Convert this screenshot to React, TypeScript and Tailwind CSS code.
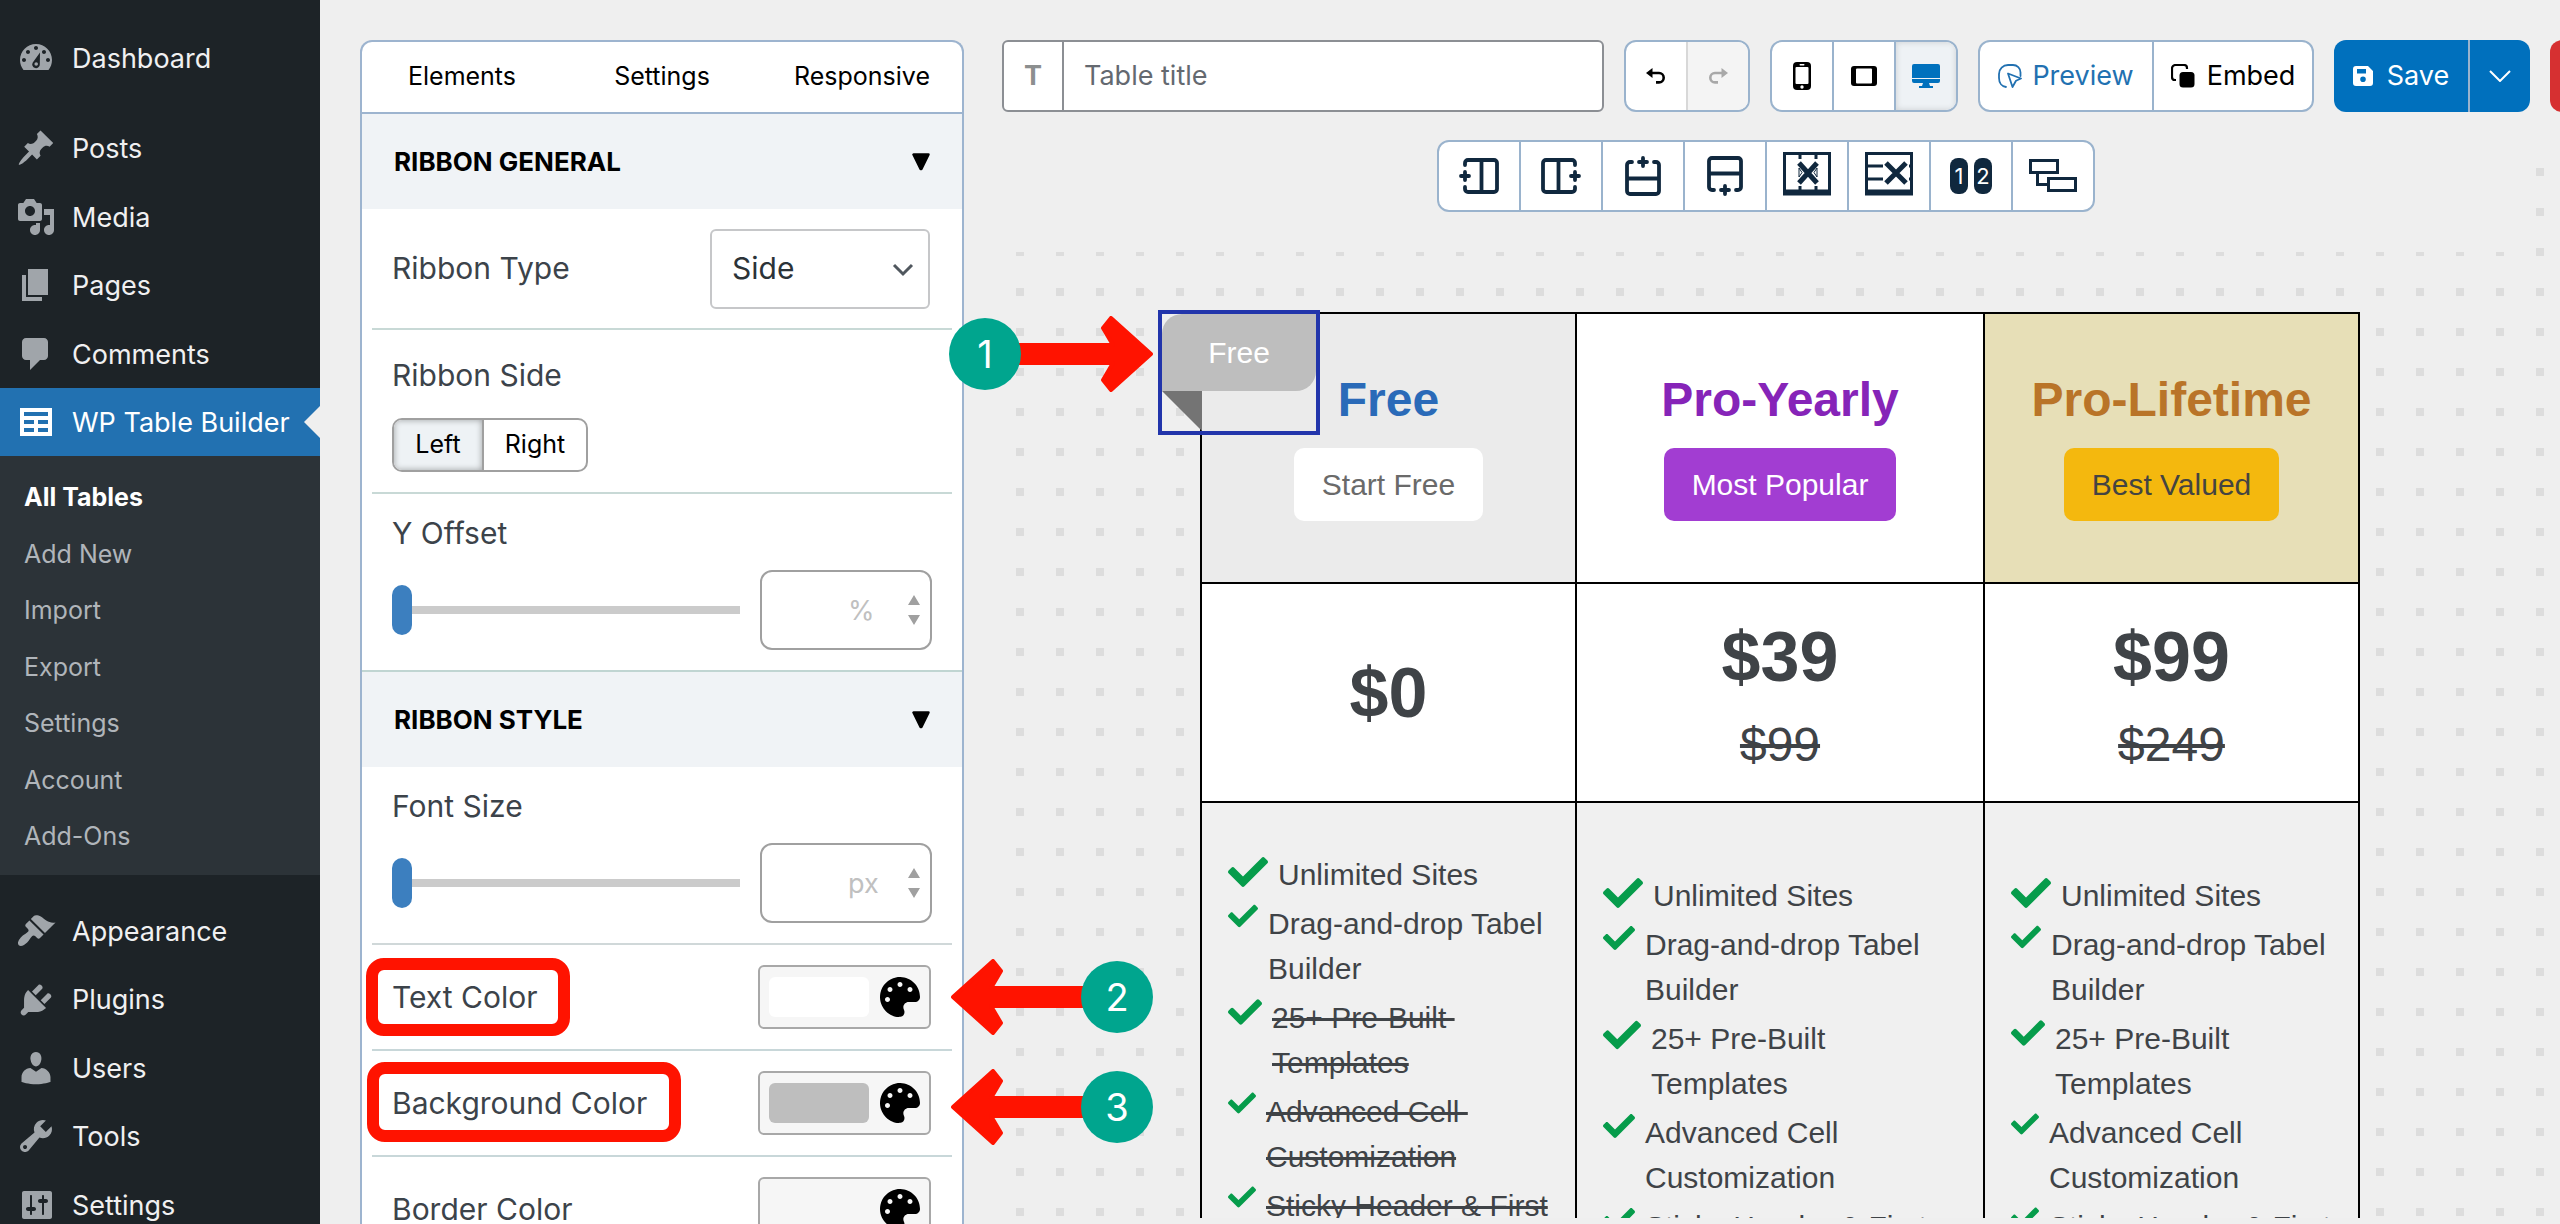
import { useState } from "react";
import type { ReactNode } from "react";
import { FaPalette } from "react-icons/fa";

const DASHICONS: Record<string, string> = {
  dashboard:
    "M3.76 16h12.48c1.1-1.37 1.76-3.11 1.76-5 0-4.42-3.58-8-8-8s-8 3.58-8 8c0 1.89.66 3.63 1.76 5zM10 4c.55 0 1 .45 1 1s-.45 1-1 1-1-.45-1-1 .45-1 1-1zM6 6c.55 0 1 .45 1 1s-.45 1-1 1-1-.45-1-1 .45-1 1-1zM14 6c.55 0 1 .45 1 1s-.45 1-1 1-1-.45-1-1 .45-1 1-1zM4 10c.55 0 1 .45 1 1s-.45 1-1 1-1-.45-1-1 .45-1 1-1zM16 10c.55 0 1 .45 1 1s-.45 1-1 1-1-.45-1-1 .45-1 1-1zM12 7.2l-.1 5.9a1.9 1.9 0 1 1-3.5-.9zM10.1 12.1a.9.9 0 1 0 0 1.8.9.9 0 0 0 0-1.8z",
  posts:
    "M10.44 3.02l1.82-1.82 6.36 6.35-1.83 1.82c-1.05-.68-2.48-.57-3.41.36l-.75.75c-.92.93-1.04 2.35-.35 3.41l-1.83 1.82-2.41-2.41-2.8 2.79c-.42.42-3.38 2.71-3.8 2.29s1.86-3.39 2.28-3.81l2.79-2.79L4.1 9.36l1.83-1.82c1.05.69 2.48.57 3.4-.36l.75-.75c.93-.92 1.05-2.35.36-3.41z",
  media:
    "M13 11V4c0-.55-.45-1-1-1h-1.67L9 1H5L3.67 3H2c-.55 0-1 .45-1 1v7c0 .55.45 1 1 1h10c.55 0 1-.45 1-1zM7 4.5c1.38 0 2.5 1.12 2.5 2.5S8.38 9.5 7 9.5 4.5 8.38 4.5 7 5.62 4.5 7 4.5zM14 6h5v10.5c0 1.38-1.12 2.5-2.5 2.5S14 17.88 14 16.5s1.12-2.5 2.5-2.5c.17 0 .34.02.5.05V9h-3V6zm-4 8.05V13h2v3.5c0 1.38-1.12 2.5-2.5 2.5S7 17.88 7 16.5 8.12 14 9.5 14c.17 0 .34.02.5.05z",
  pages: "M6 15V2h10v13H6zm-1 1h8v2H3V5h2v11z",
  comments: "M5 2h9c1.1 0 2 .9 2 2v7c0 1.1-.9 2-2 2h-2l-5 5v-5H5c-1.1 0-2-.9-2-2V4c0-1.1.9-2 2-2z",
  table: "M18 17V3H2v14h16zM16 7H4V5h12v2zm-7 4H4V9h5v2zm7 0h-5V9h5v2zm-7 4H4v-2h5v2zm7 0h-5v-2h5v2z",
  appearance:
    "M14.48 11.06L7.41 3.99l1.5-1.5c.5-.56 2.3-.47 3.51.32 1.21.8 1.43 1.28 2.91 2.1 1.18.64 2.45 1.26 4.45.85zm-.71.71L6.7 4.7 4.93 6.47c-.39.39-.39 1.02 0 1.41l1.06 1.06c.39.39.39 1.03 0 1.42-.6.6-1.43 1.11-2.21 1.69-.35.26-.7.53-1.01.84C1.43 14.23.4 16.08 1.4 17.07c.99 1 2.84-.03 4.18-1.36.31-.31.58-.66.85-1.02.57-.78 1.08-1.61 1.69-2.21.39-.39 1.02-.39 1.41 0l1.06 1.06c.39.39 1.02.39 1.41 0z",
  plugins:
    "M13.11 4.36L9.87 7.6 8 5.73l3.24-3.24c.35-.34 1.05-.2 1.56.32.52.51.66 1.21.31 1.55zm-8 1.77l.91-1.12 9.01 9.01-1.19.84c-.71.71-2.63 1.16-3.82 1.16H6.14L4.9 17.26c-.59.59-1.54.59-2.12 0-.59-.58-.59-1.53 0-2.12l1.24-1.24v-3.88c0-1.13.4-3.19 1.09-3.89zm7.26 3.97l3.24-3.24c.34-.35 1.04-.21 1.55.31.52.51.66 1.21.31 1.55l-3.24 3.25z",
  users:
    "M10 9.25c-2.27 0-2.73-3.44-2.73-3.44C7 4.02 7.82 2 9.97 2c2.16 0 2.98 2.02 2.71 3.81 0 0-.41 3.44-2.68 3.44zm0 2.57L12.72 10c2.39 0 4.52 2.33 4.52 4.53v2.49s-3.65 1.13-7.24 1.13c-3.65 0-7.24-1.13-7.24-1.13v-2.49c0-2.25 1.94-4.48 4.47-4.48z",
  tools:
    "M16.68 9.77c-1.34 1.34-3.3 1.67-4.95.99l-5.41 6.52c-.99.99-2.59.99-3.58 0s-.99-2.59 0-3.57l6.52-5.42c-.68-1.65-.35-3.61.99-4.95 1.28-1.28 3.12-1.62 4.72-1.06l-2.89 2.89 2.82 2.82 2.86-2.87c.53 1.58.18 3.39-1.08 4.65zM3.81 16.21c.4.39 1.04.39 1.43 0 .4-.4.4-1.04 0-1.43-.39-.4-1.03-.4-1.43 0-.39.39-.39 1.03 0 1.43z",
  settings:
    "M18 16V4c0-.55-.45-1-1-1H4c-.55 0-1 .45-1 1v12c0 .55.45 1 1 1h13c.55 0 1-.45 1-1zM8 11h1c.55 0 1 .45 1 1s-.45 1-1 1H8v1.5c0 .28-.22.5-.5.5s-.5-.22-.5-.5V13H6c-.55 0-1-.45-1-1s.45-1 1-1h1V5.5c0-.28.22-.5.5-.5s.5.22.5.5V11zm5-2h-1c-.55 0-1-.45-1-1s.45-1 1-1h1V5.5c0-.28.22-.5.5-.5s.5.22.5.5V7h1c.55 0 1 .45 1 1s-.45 1-1 1h-1v5.5c0 .28-.22.5-.5.5s-.5-.22-.5-.5V9z",
};

const CONTENT_LINKS = [
  { icon: "posts", label: "Posts" },
  { icon: "media", label: "Media" },
  { icon: "pages", label: "Pages" },
  { icon: "comments", label: "Comments" },
];

const ADMIN_LINKS = [
  { icon: "appearance", label: "Appearance" },
  { icon: "plugins", label: "Plugins" },
  { icon: "users", label: "Users" },
  { icon: "tools", label: "Tools" },
  { icon: "settings", label: "Settings" },
];

const SUBMENU = ["Add New", "Import", "Export", "Settings", "Account", "Add-Ons"];

function MenuLink({ icon, label, active }: { icon: string; label: string; active?: boolean }) {
  return (
    <a
      href="#"
      className={
        active
          ? "relative flex h-[68px] items-center bg-[#2271b1] text-[27px] text-white"
          : "flex items-center text-[27px] text-[#f0f0f1]"
      }
    >
      <span className="flex w-[72px] shrink-0 justify-center">
        <svg viewBox="0 0 20 20" className={active ? "size-10" : "size-10 text-[#a0a5aa]"} fill="currentColor" fillRule="evenodd">
          <path d={DASHICONS[icon]} />
        </svg>
      </span>
      <span className="whitespace-nowrap pt-0.5">{label}</span>
      {active && (
        <span className="absolute right-0 top-[18px] border-y-16 border-r-16 border-y-transparent border-r-[#efefef]" />
      )}
    </a>
  );
}

function Sidebar() {
  return (
    <nav className="w-80 shrink-0 bg-[#1d2327]">
      <div className="grid h-[92px] pt-6">
        <MenuLink icon="dashboard" label="Dashboard" />
      </div>
      <div className="mt-[22px] grid h-[274px] grid-rows-4">
        {CONTENT_LINKS.map((item) => (
          <MenuLink key={item.label} {...item} />
        ))}
      </div>
      <MenuLink icon="table" label="WP Table Builder" active />
      <div className="grid h-[419px] grid-rows-7 bg-[#2c3338] px-6 pb-[10px] pt-[14px] text-[25px] text-[#b0b5ba]">
        <a href="#" className="flex items-center font-bold text-white">
          All Tables
        </a>
        {SUBMENU.map((label) => (
          <a key={label} href="#" className="flex items-center">
            {label}
          </a>
        ))}
      </div>
      <div className="mt-[22px] grid h-[342px] grid-rows-5">
        {ADMIN_LINKS.map((item) => (
          <MenuLink key={item.label} {...item} />
        ))}
      </div>
    </nav>
  );
}

function SectionHeader({ title }: { title: string }) {
  return (
    <button className="flex h-[95px] w-full items-center justify-between bg-[#f0f3f6] pl-8 pr-8 text-[26px] font-bold text-black">
      {title}
      <svg viewBox="0 0 18 18" className="size-[18px]">
        <path d="M1.500 1.500h15L9.400 16h-.8z" stroke="#000" strokeWidth="2.500" strokeLinejoin="round" />
      </svg>
    </button>
  );
}

function RangeField({ id, label, unit }: { id: string; label: string; unit: string }) {
  const [value, setValue] = useState("");
  return (
    <div className="px-[30px] pb-5 pt-[19px]">
      <label htmlFor={id} className="block text-[30px] leading-10 text-[#3c434a]">
        {label}
      </label>
      <div className="mt-[17px] flex items-center gap-5">
        <input
          type="range"
          aria-label={label}
          value={value || 0}
          onChange={(e) => setValue(e.target.value)}
          className="h-[50px] min-w-0 flex-1 appearance-none bg-transparent [&::-webkit-slider-runnable-track]:h-2 [&::-webkit-slider-runnable-track]:bg-[#cbcbcb] [&::-webkit-slider-thumb]:-mt-[21px] [&::-webkit-slider-thumb]:h-[50px] [&::-webkit-slider-thumb]:w-5 [&::-webkit-slider-thumb]:appearance-none [&::-webkit-slider-thumb]:rounded-[10px] [&::-webkit-slider-thumb]:bg-[#3c7fbf]"
        />
        <div className="relative">
          <input
            id={id}
            value={value}
            placeholder={unit}
            onChange={(e) => setValue(e.target.value)}
            className="h-20 w-[172px] rounded-xl border-2 border-[#a0a0a0] bg-white pl-[86px] pr-10 text-[27px] outline-none placeholder:text-[#c0c0c0]"
          />
          <svg viewBox="0 0 12 30" className="absolute right-3 top-[25px] h-[30px] w-3" fill="#a0a0a0">
            <path d="M6 0l6 10H0zM0 20h12l-6 10z" />
          </svg>
        </div>
      </div>
    </div>
  );
}

function Arrow({ flip }: { flip?: boolean }) {
  return (
    <svg viewBox="0 0 140 76" className={flip ? "h-[76px] w-[140px] rotate-180" : "h-[76px] w-[140px]"} fill="#ff1300">
      <path
        d="M2 38L42 2l8 10-10 17h100v18H40l10 17-8 10z"
        stroke="#ff1300"
        strokeWidth="4"
        strokeLinejoin="round"
      />
    </svg>
  );
}

function StepBadge({ step }: { step: number }) {
  return (
    <span className="z-10 flex size-[72px] items-center justify-center rounded-full bg-[#00a58e] text-[38px] text-white">
      {step}
    </span>
  );
}

function ColorField({ label, swatch, children }: { label: string; swatch: string; children?: ReactNode }) {
  return (
    <div className="relative mx-[10px] flex h-[106px] items-center justify-between border-b-2 border-[#c8d7d9] pl-5 pr-[21px]">
      <span className="text-[30px] text-[#3c434a]">{label}</span>
      <button
        aria-label={label}
        className="flex h-16 w-[173px] items-center justify-between rounded-md border-2 border-[#a8a8a8] bg-[#f6f6f6] px-[9px]"
      >
        <span className={swatch} />
        <FaPalette className="size-10 text-black" />
      </button>
      {children}
    </div>
  );
}

function SettingsPanel() {
  const [side, setSide] = useState("Left");
  return (
    <aside className="relative z-10 ml-10 mt-10 w-[604px] shrink-0">
      <div className="h-[1300px] rounded-t-xl border-2 border-b-0 border-[#9db4cf] bg-white">
        <div className="grid h-[72px] grid-cols-3 border-b-2 border-[#9db4cf] text-[25px] text-black">
          <button>Elements</button>
          <button>Settings</button>
          <button>Responsive</button>
        </div>
        <SectionHeader title="RIBBON GENERAL" />
        <div className="mx-[10px] flex h-[121px] items-center justify-between border-b-2 border-[#c8d9d6] pl-5 pr-[22px]">
          <label htmlFor="ribbon-type" className="text-[30px] text-[#3c434a]">
            Ribbon Type
          </label>
          <div className="relative">
            <select
              id="ribbon-type"
              className="h-20 w-[220px] appearance-none rounded-md border-2 border-[#c6c7c9] bg-white pl-5 text-[30px] text-[#2c3338]"
            >
              <option>Side</option>
              <option>Icon</option>
            </select>
            <svg viewBox="0 0 22 14" className="pointer-events-none absolute right-4 top-[34px] h-[14px] w-[22px]">
              <path d="M2 2l9 9 9-9" fill="none" stroke="#50575e" strokeWidth="3" />
            </svg>
          </div>
        </div>
        <div className="mx-[10px] border-b-2 border-[#c8d9d6] px-5 pb-5 pt-[25px]">
          <div className="text-[30px] leading-10 text-[#3c434a]">Ribbon Side</div>
          <div className="mt-[23px] flex h-[54px] w-[196px] overflow-hidden rounded-[10px] border-2 border-[#a0a0a0] text-[25px] text-black">
            {["Left", "Right"].map((name) => (
              <button
                key={name}
                onClick={() => setSide(name)}
                className={
                  side === name
                    ? "w-[88px] bg-[#eef2f5] shadow-[inset_0_0_6px_rgba(0,0,0,0.35)]"
                    : "flex-1 border-l-2 border-[#a0a0a0]"
                }
              >
                {name}
              </button>
            ))}
          </div>
        </div>
        <RangeField id="y-offset" label="Y Offset" unit="%" />
        <div className="border-t-2 border-[#c0d5d2]">
          <SectionHeader title="RIBBON STYLE" />
        </div>
        <RangeField id="font-size" label="Font Size" unit="px" />
        <div className="mx-[10px] border-t-2 border-[#d0d8d9]" />
        <ColorField label="Text Color" swatch="h-10 w-[100px] rounded-md bg-white">
          <span className="absolute -left-[6px] top-[13px] h-[78px] w-[204px] rounded-[18px] border-12 border-[#ff1300]" />
          <div className="absolute left-[579px] top-[14px] flex items-center">
            <Arrow />
            <span className="-ml-[10px]">
              <StepBadge step={2} />
            </span>
          </div>
        </ColorField>
        <ColorField label="Background Color" swatch="h-10 w-[100px] rounded-md bg-[#bebebe]">
          <span className="absolute -left-[5px] top-[11px] h-20 w-[314px] rounded-[18px] border-12 border-[#ff1300]" />
          <div className="absolute left-[579px] top-[18px] flex items-center">
            <Arrow />
            <span className="-ml-[10px]">
              <StepBadge step={3} />
            </span>
          </div>
        </ColorField>
        <ColorField label="Border Color" swatch="h-10 w-[100px] rounded-md" />
      </div>
      <div className="absolute left-[589px] top-[276px] flex items-center">
        <StepBadge step={1} />
        <span className="-ml-2">
          <Arrow flip />
        </span>
      </div>
    </aside>
  );
}

function TopBar() {
  const [title, setTitle] = useState("");
  return (
    <header className="-mr-[60px] flex gap-5 pt-10 text-[27px]">
      <div className="flex h-[72px] min-w-0 flex-1 rounded-md border-2 border-[#8c8f94] bg-white">
        <label
          htmlFor="table-title"
          className="flex w-[60px] items-center justify-center border-r-2 border-[#8c8f94] font-bold text-[#8c8f8f]"
        >
          T
        </label>
        <input
          id="table-title"
          value={title}
          onChange={(e) => setTitle(e.target.value)}
          placeholder="Table title"
          className="min-w-0 flex-1 px-5 outline-none placeholder:text-[#646970]"
        />
      </div>
      <div className="flex h-[72px] w-[126px] overflow-hidden rounded-xl border-2 border-[#9ab3cd] bg-white">
        <button aria-label="Undo" className="flex flex-1 items-center justify-center text-black">
          <UndoIcon />
        </button>
        <button
          aria-label="Redo"
          className="flex flex-1 items-center justify-center border-l-2 border-[#d8d8d8] bg-[#f4f4f4] text-[#a8a8a8]"
        >
          <span className="-scale-x-100">
            <UndoIcon />
          </span>
        </button>
      </div>
      <div className="flex h-[72px] w-[188px] overflow-hidden rounded-xl border-2 border-[#9ab3cd] bg-white">
        <button aria-label="Phone" className="flex flex-1 items-center justify-center">
          <svg viewBox="0 0 18 28" className="h-7 w-[18px]">
            <rect width="18" height="28" rx="4" />
            <rect x="2.500" y="5" width="13" height="17" rx="1" fill="#fff" />
            <rect x="6.500" y="2" width="5" height="1.500" rx=".7" fill="#fff" />
            <circle cx="9" cy="25" r="1.700" fill="#fff" />
          </svg>
        </button>
        <button aria-label="Tablet" className="flex flex-1 items-center justify-center border-l-2 border-[#9ab3cd]">
          <svg viewBox="0 0 26 20" className="h-5 w-[26px]">
            <rect width="26" height="20" rx="3" />
            <rect x="5" y="2.500" width="16" height="15" rx="1" fill="#fff" />
          </svg>
        </button>
        <button
          aria-label="Desktop"
          className="flex flex-1 items-center justify-center border-l-2 border-[#9ab3cd] bg-[#eef2f5] shadow-[inset_0_0_6px_rgba(0,0,0,0.15)]"
        >
          <svg viewBox="0 0 28 24" className="h-6 w-7" fill="#0071bd">
            <path d="M2 0h24a2 2 0 0 1 2 2v12H0V2a2 2 0 0 1 2-2zM0 15h28v2a2 2 0 0 1-2 2H2a2 2 0 0 1-2-2zM11 19h6l1 3h3v2H7v-2h3z" />
          </svg>
        </button>
      </div>
      <div className="flex h-[72px] overflow-hidden rounded-xl border-2 border-[#9ab3cd] bg-white">
        <button className="flex w-[172px] items-center justify-center gap-[10px] text-[#2271b1]">
          <svg viewBox="0 0 24 24" className="size-6" fill="none" stroke="currentColor" strokeWidth="1.800" strokeLinejoin="round">
            <path d="M22.500 12V8.500a7.500 7.500 0 0 0-7.500-7.500H10A9 9 0 0 0 1 10v4c0 5 3 8.500 7 9" strokeLinecap="round" />
            <path d="M10 9.500l13 5-5 2.200-3.500 6.300z" />
          </svg>
          Preview
        </button>
        <button className="flex w-[160px] items-center justify-center gap-3 border-l-2 border-[#9ab3cd] text-black">
          <svg viewBox="0 0 24 24" className="size-6">
            <path d="M5 16H4a3 3 0 0 1-3-3V4.500A3.500 3.500 0 0 1 4.500 1H13a3 3 0 0 1 3 3v1" fill="none" stroke="#000" strokeWidth="2.200" />
            <rect x="8.500" y="8" width="15" height="15.500" rx="3.500" />
          </svg>
          Embed
        </button>
      </div>
      <div className="flex h-[72px] w-[196px] overflow-hidden rounded-xl bg-[#0070bd] text-white">
        <button className="flex w-[134px] items-center justify-center gap-[14px]">
          <svg viewBox="0 0 20 20" className="size-5" fill="#fff" fillRule="evenodd">
            <path d="M3 0h12l5 5v12a3 3 0 0 1-3 3H3a3 3 0 0 1-3-3V3a3 3 0 0 1 3-3zM4 3v4.500h9V3zM10 10.500a2.800 2.800 0 1 0 0 5.600 2.800 2.800 0 0 0 0-5.600z" />
          </svg>
          Save
        </button>
        <button aria-label="Save options" className="flex flex-1 items-center justify-center border-l-2 border-[#9ab3cd]">
          <svg viewBox="0 0 22 12" className="h-3 w-[22px]">
            <path d="M1 1l10 10L21 1" fill="none" stroke="#fff" strokeWidth="2" />
          </svg>
        </button>
      </div>
      <button aria-label="Close" className="h-[72px] w-[70px] rounded-xl bg-[#d63031]" />
    </header>
  );
}

function UndoIcon() {
  return (
    <svg viewBox="0 0 20 16" className="h-4 w-5" fill="currentColor">
      <path d="M6.500 0v10L0 5z" />
      <path d="M5 5h8a4.700 4.700 0 0 1 0 9.400H10" fill="none" stroke="currentColor" strokeWidth="2.600" />
    </svg>
  );
}

function InsertIcon({ className }: { className: string }) {
  return (
    <svg viewBox="0 0 40 40" className={className} fill="none" stroke="#10283e" strokeWidth="3.800" strokeLinecap="round">
      <path d="M6 9V7a3 3 0 0 1 3-3h26a3 3 0 0 1 3 3v26a3 3 0 0 1-3 3H9a3 3 0 0 1-3-3v-2M22.500 4v32" />
      <path d="M6 16v8M2 20h8" />
    </svg>
  );
}

const TABLE_TOOLS = [
  { label: "Insert column before", icon: <InsertIcon className="size-10" /> },
  { label: "Insert column after", icon: <InsertIcon className="size-10 rotate-180" /> },
  { label: "Insert row above", icon: <InsertIcon className="size-10 rotate-90" /> },
  { label: "Insert row below", icon: <InsertIcon className="size-10 -rotate-90" /> },
  {
    label: "Delete column",
    icon: (
      <svg viewBox="0 0 48 44" className="mb-1 h-11 w-12" stroke="#10283e" fill="none" strokeWidth="3">
        <path d="M1.500 43V1.500h45V43M17 1v6M33 1v6M17 34v5M33 34v5" />
        <path d="M16 16v9l3-4.500zM34 16v9l-3-4.500z" strokeWidth="1" />
        <path d="M0 40.500h48" strokeWidth="6" />
        <path d="M16 11l18 20M34 11L16 31" strokeWidth="5" />
      </svg>
    ),
  },
  {
    label: "Delete row",
    icon: (
      <svg viewBox="0 0 48 44" className="mb-1 h-11 w-12" stroke="#10283e" fill="none" strokeWidth="3">
        <path d="M1.500 43V1.500h45V43M1 14h17M1 27h17M44 14h3M44 27h3" />
        <path d="M0 40.500h48" strokeWidth="6" />
        <path d="M21 11l20 20M41 11L21 31" strokeWidth="5" />
      </svg>
    ),
  },
  {
    label: "Reorder columns",
    icon: (
      <span className="flex gap-[6px] text-[22px] leading-9 text-white">
        <span className="w-[18px] rounded-lg bg-[#10283e] text-center">1</span>
        <span className="w-[18px] rounded-lg bg-[#10283e] text-center">2</span>
      </span>
    ),
  },
  {
    label: "Merge cells",
    icon: (
      <svg viewBox="0 0 48 34" className="h-[34px] w-12" stroke="#10283e" fill="none" strokeWidth="3">
        <path d="M1.500 1.500h27v12h-27zM19.500 19.500h27v12h-27zM8.500 13.500v12h11" />
      </svg>
    ),
  },
];

function Check({ className }: { className: string }) {
  return (
    <svg viewBox="0 0 512 512" className={className} fill="#069c4b">
      <path d="M173.898 439.404l-166.400-166.400c-9.997-9.997-9.997-26.206 0-36.204l36.203-36.204c9.997-9.998 26.207-9.998 36.204 0L192 312.690 432.095 72.596c9.997-9.997 26.207-9.997 36.204 0l36.203 36.204c9.997 9.997 9.997 26.206 0 36.204l-294.400 294.401c-9.998 9.997-26.207 9.997-36.204-.001z" />
    </svg>
  );
}

const FEATURES = [
  { text: "Unlimited Sites", check: "size-10 shrink-0", wide: "size-10 shrink-0" },
  { text: "Drag-and-drop Tabel\nBuilder", check: "size-[30px] shrink-0", wide: "size-8 shrink-0" },
  { text: "25+ Pre-Built \nTemplates", check: "size-[34px] shrink-0", wide: "size-[38px] shrink-0" },
  { text: "Advanced Cell \nCustomization", check: "size-[28px] shrink-0", wide: "size-8 shrink-0" },
  { text: "Sticky Header & First", check: "size-[28px] shrink-0", wide: "size-8 shrink-0" },
];

function FeatureList({ wide, struckFrom = FEATURES.length }: { wide?: boolean; struckFrom?: number }) {
  return (
    <ul className="flex flex-col gap-1 text-[30px] leading-[45px] text-[#3f4347]">
      {FEATURES.map((item, i) => (
        <li key={item.text} className="flex gap-[10px]">
          <Check className={wide ? item.wide : item.check} />
          <span className={i >= struckFrom ? "whitespace-pre line-through" : "whitespace-pre"}>{item.text}</span>
        </li>
      ))}
    </ul>
  );
}

function PricingTable() {
  return (
    <table className="w-full table-fixed border-collapse text-center text-[#3f4347]">
      <colgroup>
        <col className="w-[375px]" />
        <col />
        <col className="w-[375px]" />
      </colgroup>
      <thead>
        <tr className="h-[270px] align-top text-5xl leading-[60px]">
          <th className="border-2 border-black bg-[#ebebeb] pt-14 text-[#2a6ab8]">
            Free
            <br />
            <button className="mt-[18px] h-[73px] rounded-[10px] bg-white px-7 text-[30px] font-normal text-[#6a6a6a]">
              Start Free
            </button>
          </th>
          <th className="border-2 border-black bg-white pt-14 text-[#8624b8]">
            Pro-Yearly
            <br />
            <button className="mt-[18px] h-[73px] rounded-[10px] bg-[#a23dd2] px-7 text-[30px] font-normal text-white">
              Most Popular
            </button>
          </th>
          <th className="border-2 border-black bg-[#e7dfb7] pt-14 text-[#b97428]">
            Pro-Lifetime
            <br />
            <button className="mt-[18px] h-[73px] rounded-[10px] bg-[#f4b80e] px-7 text-[30px] font-normal text-[#444441]">
              Best Valued
            </button>
          </th>
        </tr>
      </thead>
      <tbody>
        <tr className="h-[219px] bg-white">
          <td className="border-2 border-black">
            <div className="text-[70px] font-bold leading-[88px]">$0</div>
          </td>
          <td className="border-2 border-black">
            <div className="text-[70px] font-bold leading-[88px]">$39</div>
            <div className="mt-4 text-5xl leading-[56px] line-through">$99</div>
          </td>
          <td className="border-2 border-black">
            <div className="text-[70px] font-bold leading-[88px]">$99</div>
            <div className="mt-4 text-5xl leading-[56px] line-through">$249</div>
          </td>
        </tr>
        <tr className="bg-[#f0f0f0] text-left align-top">
          <td className="border-2 border-black px-[26px] pb-16 pt-[49px]">
            <FeatureList struckFrom={2} />
          </td>
          <td className="border-2 border-black px-[26px] pt-[70px]">
            <FeatureList wide />
          </td>
          <td className="border-2 border-black px-[26px] pt-[70px]">
            <FeatureList />
          </td>
        </tr>
      </tbody>
    </table>
  );
}

function Editor() {
  return (
    <main className="ml-[38px] flex min-w-0 flex-1 flex-col overflow-hidden">
      <TopBar />
      <div className="mb-[6px] mt-7 min-h-0 flex-1 overflow-hidden bg-[conic-gradient(at_8px_8px,transparent_75%,#dddddd_0)] bg-[length:40px_40px] bg-[position:14px_28px] pr-0.5">
        <div className="mr-7 flex h-28 justify-center bg-[#efefef]">
          <div className="flex h-[72px] w-[658px] divide-x-2 divide-[#9ab3cd] rounded-xl border-2 border-[#9ab3cd] bg-white">
            {TABLE_TOOLS.map((tool) => (
              <button key={tool.label} aria-label={tool.label} className="flex flex-1 items-center justify-center">
                {tool.icon}
              </button>
            ))}
          </div>
        </div>
        <div className="relative mx-auto mt-[60px] w-[1160px] font-['Liberation_Sans',Arial,sans-serif]">
          <PricingTable />
          <div className="absolute -left-[42px] -top-[2px] h-[125px] w-[162px] border-4 border-[#2235ab]">
            <div className="flex h-[77px] items-center justify-center rounded-br-[20px] rounded-tl-[20px] bg-[#bebebe] text-[30px] text-white">
              Free
            </div>
            <div className="w-0 border-l-40 border-t-40 border-l-transparent border-t-[#747474]" />
          </div>
        </div>
      </div>
    </main>
  );
}

export default function App() {
  return (
    <div className="flex h-screen overflow-hidden bg-[#efefef] font-['Inter',sans-serif]">
      <Sidebar />
      <SettingsPanel />
      <Editor />
    </div>
  );
}
